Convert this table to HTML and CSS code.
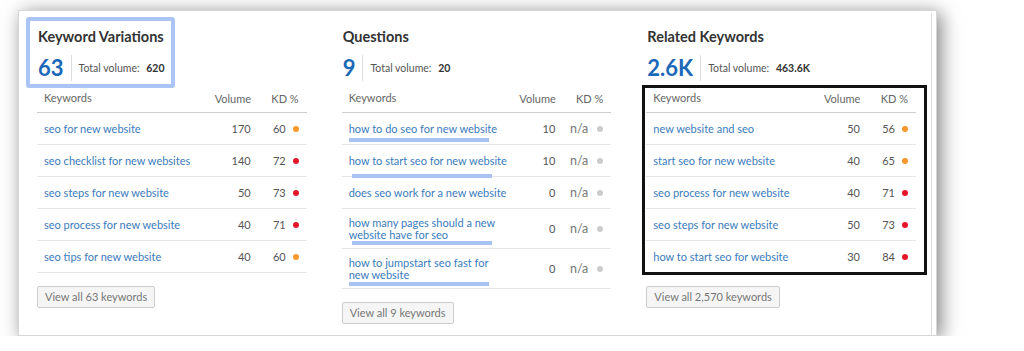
FILE: index.html
```html
<!DOCTYPE html>
<html lang="en">
  <head>
    <meta charset="UTF-8" />
    <title>Keyword Overview</title>
    <link rel="stylesheet" href="styles.css">
  </head>
  <body>
    <div class="frame">
      <div class="panel">
        <!-- Keyword Variations -->
        <section class="col">
          <div class="col-head">
            <h2>Keyword Variations</h2>
            <div class="stats">
              <span class="count">63</span>
              <span class="total">Total volume: <b>620</b></span>
            </div>
            <div class="mark-box"></div>
          </div>
          <div class="table">
            <div class="row head">
              <span class="kw">Keywords</span><span class="vol">Volume</span><span class="kd">KD %</span>
            </div>
            <div class="row">
              <a class="kw" href="#">seo for new website</a><span class="vol">170</span><span class="kd">60 <i class="dot orange"></i></span>
            </div>
            <div class="row">
              <a class="kw" href="#">seo checklist for new websites</a><span class="vol">140</span><span class="kd">72 <i class="dot red"></i></span>
            </div>
            <div class="row">
              <a class="kw" href="#">seo steps for new website</a><span class="vol">50</span><span class="kd">73 <i class="dot red"></i></span>
            </div>
            <div class="row">
              <a class="kw" href="#">seo process for new website</a><span class="vol">40</span><span class="kd">71 <i class="dot red"></i></span>
            </div>
            <div class="row">
              <a class="kw" href="#">seo tips for new website</a><span class="vol">40</span><span class="kd">60 <i class="dot orange"></i></span>
            </div>
          </div>
          <a class="btn" href="#">View all 63 keywords</a>
        </section>

        <!-- Questions -->
        <section class="col">
          <div class="col-head">
            <h2>Questions</h2>
            <div class="stats">
              <span class="count">9</span>
              <span class="total">Total volume: <b>20</b></span>
            </div>
          </div>
          <div class="table">
            <div class="row head">
              <span class="kw">Keywords</span><span class="vol">Volume</span><span class="kd">KD %</span>
            </div>
            <div class="row">
              <a class="kw" href="#">how to do seo for new website<em class="hl"></em></a><span class="vol">10</span><span class="kd"><span class="na">n/a</span> <i class="dot grey"></i></span>
            </div>
            <div class="row">
              <a class="kw" href="#">how to start seo for new website<em class="hl low"></em></a><span class="vol">10</span><span class="kd"><span class="na">n/a</span> <i class="dot grey"></i></span>
            </div>
            <div class="row">
              <a class="kw" href="#">does seo work for a new website</a><span class="vol">0</span><span class="kd"><span class="na">n/a</span> <i class="dot grey"></i></span>
            </div>
            <div class="row tall">
              <a class="kw narrow" href="#">how many pages should a new website have for seo<em class="hl shift"></em></a><span class="vol">0</span><span class="kd"><span class="na">n/a</span> <i class="dot grey"></i></span>
            </div>
            <div class="row tall">
              <a class="kw narrow" href="#">how to jumpstart seo fast for new website<em class="hl last"></em></a><span class="vol">0</span><span class="kd"><span class="na">n/a</span> <i class="dot grey"></i></span>
            </div>
          </div>
          <a class="btn" href="#">View all 9 keywords</a>
        </section>

        <!-- Related Keywords -->
        <section class="col">
          <div class="col-head">
            <h2>Related Keywords</h2>
            <div class="stats">
              <span class="count">2.6K</span>
              <span class="total">Total volume: <b>463.6K</b></span>
            </div>
          </div>
          <div class="table boxed">
            <div class="row head">
              <span class="kw">Keywords</span><span class="vol">Volume</span><span class="kd">KD %</span>
            </div>
            <div class="row">
              <a class="kw" href="#">new website and seo</a><span class="vol">50</span><span class="kd">56 <i class="dot orange"></i></span>
            </div>
            <div class="row">
              <a class="kw" href="#">start seo for new website</a><span class="vol">40</span><span class="kd">65 <i class="dot orange"></i></span>
            </div>
            <div class="row">
              <a class="kw" href="#">seo process for new website</a><span class="vol">40</span><span class="kd">71 <i class="dot red"></i></span>
            </div>
            <div class="row">
              <a class="kw" href="#">seo steps for new website</a><span class="vol">50</span><span class="kd">73 <i class="dot red"></i></span>
            </div>
            <div class="row">
              <a class="kw" href="#">how to start seo for website</a><span class="vol">30</span><span class="kd">84 <i class="dot red"></i></span>
            </div>
          </div>
          <a class="btn" href="#">View all 2,570 keywords</a>
        </section>
      </div>
    </div>
  </body>
</html>
```

FILE: styles.css
```css
* {
  margin: 0;
  padding: 0;
  box-sizing: border-box;
}

body {
  background-color: #ffffff;
  font-family: Lato, "Open Sans", sans-serif;
  color: #555555;
}

.frame {
  width: 919px;
  margin: 10px 0 0 18px;
  padding: 2px 4px 0 2px;
  background-color: #ffffff;
  border: 1px solid #d6d6d6;
  box-shadow: 4px 3px 18px rgba(0, 0, 0, 0.5);
}

.panel {
  display: grid;
  grid-template-columns: repeat(3, 1fr);
  column-gap: 35px;
  height: 322px;
  padding: 14px 15px 0 16px;
  border-right: 1px solid #dcdcdc;
}

.col {
  display: flex;
  flex-direction: column;
  align-items: flex-start;
}

.col-head {
  position: relative;
  width: 100%;
  padding-left: 1px;
}

h2 {
  font-size: 14.5px;
  line-height: 20px;
  font-weight: 700;
  color: #333333;
}

.stats {
  display: flex;
  align-items: center;
  margin-top: 8px;
  height: 26px;
}

.count {
  font-size: 22px;
  font-weight: 700;
  color: #1b67b8;
  line-height: 26px;
  padding-right: 7px;
  margin-right: 7px;
  border-right: 1px solid #dddddd;
}

.total {
  font-size: 10.5px;
  color: #555555;
}

.total b {
  margin-left: 4px;
  color: #333333;
}

/* annotation frame around the first heading */
.mark-box {
  position: absolute;
  left: -11px;
  top: -10px;
  width: 149px;
  height: 71px;
  border: 4px solid #abc4f6;
  border-radius: 3px;
}

.table {
  position: relative;
  width: 100%;
  margin-top: 3px;
}

/* annotation frame around related keywords */
.table.boxed::after {
  content: "";
  position: absolute;
  left: -4px;
  right: -11px;
  top: 1px;
  bottom: -2px;
  border: 3px solid #111111;
}

.row {
  display: grid;
  grid-template-columns: 1fr 36px 56px;
  align-items: center;
  min-height: 32px;
  border-bottom: 1px solid #e6e6e6;
  font-size: 11px;
}

.row.head {
  min-height: 29px;
  border-bottom-color: #cfcfcf;
  color: #666666;
}

.row.tall {
  min-height: 40px;
}

.kw {
  position: relative;
  padding: 0 7px;
  line-height: 12px;
}

.kw.narrow {
  padding-right: 18px;
}

a.kw {
  color: #3a7cbd;
  text-decoration: none;
}

.vol {
  text-align: right;
}

.kd {
  display: flex;
  justify-content: flex-end;
  align-items: center;
  padding-right: 8px;
}

.na {
  font-size: 12.5px;
  color: #777777;
}

.dot {
  display: inline-block;
  width: 6px;
  height: 6px;
  margin-left: 7px;
  border-radius: 50%;
}

.dot.orange {
  background-color: #f7962a;
}

.dot.red {
  background-color: #e3162a;
}

.dot.grey {
  background-color: #cccccc;
  margin-left: 9px;
}

/* annotation underline */
.hl {
  position: absolute;
  left: 7px;
  bottom: -7px;
  width: 140px;
  height: 4px;
  background-color: #a9c2f4;
}

.hl.low {
  bottom: -11px;
  left: 10px;
}

.hl.shift {
  bottom: -4px;
  left: 10px;
}

.hl.last {
  bottom: -5px;
}

.btn {
  margin-top: 13px;
  padding: 3px 7px;
  font-size: 11px;
  line-height: 14px;
  color: #777777;
  text-decoration: none;
  background-color: #f5f5f5;
  border: 1px solid #cccccc;
  border-radius: 2px;
}
```
